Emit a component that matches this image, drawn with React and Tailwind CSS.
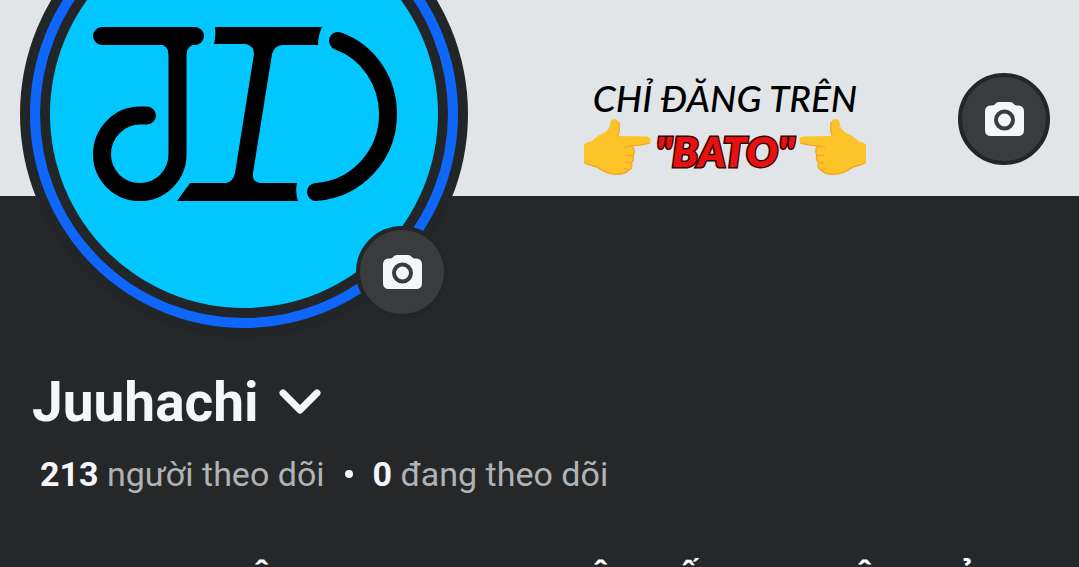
const captionParts = [
  { text: "", width: "w-[249px]" },
  { text: "Ô", width: "w-[339px]" },
  { text: "Ô", width: "w-[88px]" },
  { text: "Ố", width: "w-[176px]" },
  { text: "Ô", width: "w-[104px]" },
  { text: "Ả", width: "w-[40px]" },
];

function CameraIcon() {
  return (
    <svg width="39" height="34" viewBox="0 0 39 34" aria-hidden="true">
      <path
        fill="#f5f6f9"
        d="M14 0H25Q27.5 0 28.6 1.8Q29.6 3.6 31.5 3.6H33.5Q39 4 39 9.5V28Q39 34 33 34H6Q0 34 0 28V9.5Q0 4 5.5 3.6H7.5Q9.4 3.6 10.4 1.8Q11.5 0 14 0Z"
      />
      <circle cx="19.5" cy="18" r="8.5" fill="none" stroke="#3a3b3d" strokeWidth="4" />
    </svg>
  );
}

function CameraButton({ label, className = "" }) {
  return (
    <button
      type="button"
      aria-label={label}
      className={`flex size-[92px] shrink-0 items-center justify-center rounded-full border-4 border-[#222629] bg-[#3a3b3d] ${className}`}
    >
      <CameraIcon />
    </button>
  );
}

function PointingHand({ className = "" }) {
  return (
    <svg viewBox="43 180 200 167" className={`h-14 w-[67px] shrink-0 ${className}`} aria-hidden="true">
      <path
        fill="#fdc429"
        d="M43 256Q50 248 65 246Q82 230 106 219Q122 208 121 194Q122 181 134 180Q148 181 149 198Q150 216 144 231L231 232Q242 234 242 244Q241 254 230 256L187 262Q196 269 194 278Q192 286 190 288Q193 295 189 303L185 309Q189 317 185 324Q181 331 177 332Q172 345 146 346Q119 348 98 335Q83 323 65 320Q48 317 43 309Z"
      />
      <path
        fill="none"
        stroke="#f0a92a"
        strokeWidth="4"
        strokeLinecap="round"
        strokeLinejoin="round"
        d="M144 231Q151 215 147 190M239 251Q232 256 187 260L166 264M187 262Q197 271 190 288Q184 291 168 288M190 290Q193 304 185 310Q178 312 168 309M185 312Q188 328 177 332L164 328M176 333Q167 344 145 344Q119 346 98 333Q83 321 65 318Q50 315 44 309"
      />
    </svg>
  );
}

function AvatarLogo() {
  return (
    <svg viewBox="50 -80 388 388" className="size-full" role="img" aria-label="JD">
      <g fill="none" stroke="#000" strokeWidth="18" strokeLinecap="round">
        <path d="M102 36H195" />
        <path d="M177.5 36V154.5A37.75 37.5 0 0 1 102 154.5A38 39 0 0 1 140 115.5H147" />
        <path d="M338 41C369 52 388 82 388 114C388 155 357 189 316 192" />
      </g>
      <path d="M159 44Q168 45 168.5 54H186.5Q187 45 197 44Z" />
      <path d="M215 27H322Q318 36 318 45H282Q274 46 272 54L253 173Q252 182 260 183H297Q295 192 298 201H177L190 183H226Q233 182 235 173L254 54Q254 46 246 44H214Q216 36 215 27Z" />
    </svg>
  );
}

function Cover() {
  return (
    <header className="flex h-[196px] items-start justify-end gap-[92px] bg-[#e1e5e8] pr-[29px] pt-[73px]">
      <div className="flex flex-col items-center text-black">
        <p className="whitespace-nowrap font-['Lato','Noto_Sans',sans-serif] text-[37px] font-medium italic leading-[50px]">
          CHỈ ĐĂNG TRÊN
        </p>
        <div className="-mt-1 flex items-center gap-1">
          <PointingHand />
          <p className="flex w-[140px] justify-center whitespace-nowrap pt-2 font-['Lato','Noto_Sans',sans-serif] text-[42px] font-extrabold italic leading-[48px] text-[#e6120f] [-webkit-text-stroke:3px_#300] [paint-order:stroke]">
            "BATO"
          </p>
          <PointingHand className="-scale-x-100" />
        </div>
      </div>
      <CameraButton label="Đổi ảnh bìa" />
    </header>
  );
}

function Avatar() {
  return (
    <div className="relative -mt-[306px] ml-5 size-[448px] rounded-full bg-[#222629] p-[10px]">
      <div className="size-full rounded-full border-[10px] border-[#0f66fb] p-[10px]">
        <div className="size-full overflow-hidden rounded-full bg-[#02c7ff]">
          <AvatarLogo />
        </div>
      </div>
      <CameraButton label="Đổi ảnh đại diện" className="absolute bottom-5 right-5" />
    </div>
  );
}

export default function App() {
  return (
    <div className="h-screen overflow-hidden bg-[#252728] font-['Roboto',sans-serif] text-[#f5f6f9]">
      <Cover />
      <Avatar />

      <main>
        <div className="mt-8 flex items-center gap-5 pl-8">
          <h1 className="text-[55px] font-bold leading-[64px]">Juuhachi</h1>
          <button type="button" aria-label="Chuyển trang cá nhân">
            <svg width="42" height="26" viewBox="0 0 42 26" fill="none" aria-hidden="true">
              <path
                d="M4 4L21 21L38 4"
                stroke="#f5f6f9"
                strokeWidth="7"
                strokeLinecap="round"
                strokeLinejoin="round"
              />
            </svg>
          </button>
        </div>

        <div className="mt-5 flex items-center pl-10 text-[34px] leading-10 text-[#b0b3b6]">
          <a href="#followers">
            <strong className="font-bold text-[#f5f6f9]">213</strong> người theo dõi
          </a>
          <span className="mx-5 size-2 rounded-full bg-[#f5f6f9]" />
          <a href="#following">
            <strong className="font-bold text-[#f5f6f9]">0</strong> đang theo dõi
          </a>
        </div>

        {/* Caption line, mostly below the fold */}
        <p className="mt-[60px] flex font-['Noto_Sans',sans-serif] text-[32px] font-bold leading-[48px] text-white">
          {captionParts.map((part, i) => (
            <span key={i} className={`shrink-0 ${part.width}`}>
              {part.text}
            </span>
          ))}
        </p>
      </main>
    </div>
  );
}
